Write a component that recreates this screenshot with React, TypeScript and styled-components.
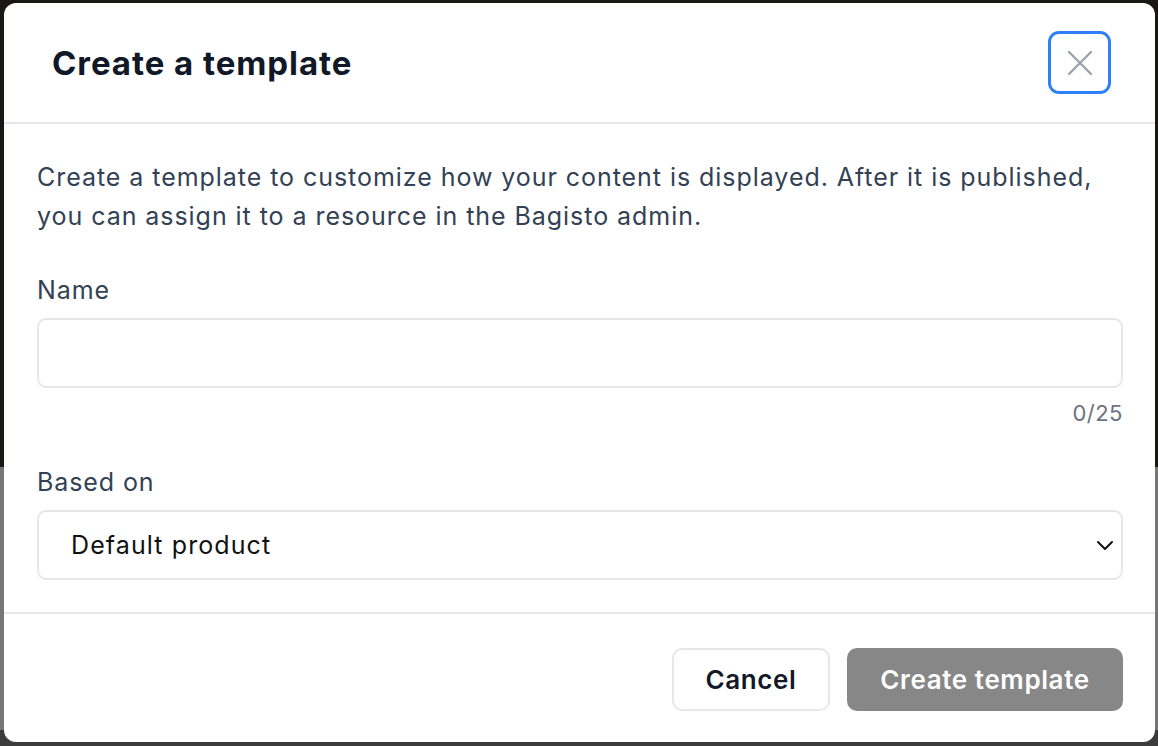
import React from "react";
import styled, { createGlobalStyle } from "styled-components";

const GlobalStyle = createGlobalStyle`
    * {
        box-sizing: border-box;
    }
    html, body {
        margin: 0;
        padding: 0;
        height: 100%;
    }
    body {
        font-family: Inter, "Noto Sans", "Liberation Sans", sans-serif;
        background: linear-gradient(to bottom, #1a1714 0, #1a1714 467px, #767676 467px, #767676 730px, #3c3c3c 730px);
        overflow: hidden;
    }
`

const Backdrop = styled.div`
    width: 1158px;
    height: 746px;
    padding: 3px 3px 4px 4px;
    display: flex;
`

const Modal = styled.div`
    flex: 1 1;
    background: #ffffff;
    border-radius: 12px;
    display: flex;
    flex-direction: column;
    overflow: hidden;
`

const Header = styled.div`
    height: 121px;
    flex: 0 0 auto;
    display: flex;
    align-items: center;
    justify-content: space-between;
    padding: 0 44px 0 48px;
    border-bottom: 2px solid #e5e7eb;

    h2 {
        margin: 0;
        font-size: 33px;
        font-weight: 700;
        color: #111827;
        letter-spacing: 0.95px;
    }
`

const CloseButton = styled.button`
    width: 63px;
    height: 63px;
    border: 3px solid #2f7ff6;
    border-radius: 11px;
    background: #ffffff;
    display: flex;
    align-items: center;
    justify-content: center;
    padding: 0;
    cursor: pointer;
    color: #9ca3af;
`

const Body = styled.div`
    flex: 1 1;
    display: flex;
    flex-direction: column;
    padding: 34px 32px 0 33px;
`

const Intro = styled.p`
    margin: 0 0 36px;
    font-size: 25px;
    line-height: 39px;
    letter-spacing: 0.95px;
    color: #334155;
`

const Label = styled.label`
    display: block;
    font-size: 25px;
    line-height: 36px;
    letter-spacing: 0.9px;
    color: #334155;
    margin-bottom: 10px;
`

const TextInput = styled.input`
    width: 100%;
    height: 70px;
    border: 2px solid #e5e7eb;
    border-radius: 9px;
    padding: 0 32px;
    font-family: inherit;
    font-size: 25px;
    color: #111111;
    outline: none;
`

const Counter = styled.div`
    text-align: right;
    font-size: 22px;
    line-height: 30px;
    letter-spacing: 0.5px;
    color: #6b7280;
    margin: 10px 0 36px;
`

const SelectWrap = styled.div`
    position: relative;
    height: 70px;

    svg {
        position: absolute;
        right: 9px;
        top: 29px;
        pointer-events: none;
    }
`

const Select = styled.select`
    width: 100%;
    height: 70px;
    appearance: none;
    border: 2px solid #e5e7eb;
    border-radius: 9px;
    background: #ffffff;
    padding: 0 32px;
    font-family: inherit;
    font-size: 25px;
    letter-spacing: 1.1px;
    color: #111111;
    outline: none;
`

const Footer = styled.div`
    height: 130px;
    flex: 0 0 auto;
    border-top: 2px solid #e5e7eb;
    display: flex;
    align-items: center;
    justify-content: flex-end;
    gap: 17px;
    padding: 2px 32px 0;
`

const Button = styled.button<{ $primary?: boolean }>`
    width: ${p => (p.$primary ? "276px" : "158px")};
    height: 63px;
    border-radius: 10px;
    border: 2px solid ${p => (p.$primary ? "#878787" : "#e5e7eb")};
    background: ${p => (p.$primary ? "#878787" : "#ffffff")};
    color: ${p => (p.$primary ? "#ffffff" : "#111827")};
    font-family: inherit;
    font-size: 26px;
    font-weight: 600;
    letter-spacing: 0.6px;
    padding: 0;
    cursor: pointer;
`

function App() {
    return (
        <>
            <GlobalStyle/>
            <Backdrop>
                <Modal>
                    <Header>
                        <h2>Create a template</h2>
                        <CloseButton aria-label="Close">
                            <svg width="26" height="26" viewBox="0 0 26 26" fill="none" stroke="currentColor"
                                 strokeWidth="2.4" strokeLinecap="round">
                                <path d="M2 2L24 24M24 2L2 24"/>
                            </svg>
                        </CloseButton>
                    </Header>
                    <Body>
                        <Intro>
                            Create a template to customize how your content is displayed. After it is published,
                            you can assign it to a resource in the Bagisto admin.
                        </Intro>
                        <Label htmlFor="tpl-name">Name</Label>
                        <TextInput id="tpl-name" maxLength={25}/>
                        <Counter>0/25</Counter>
                        <Label htmlFor="tpl-base">Based on</Label>
                        <SelectWrap>
                            <Select id="tpl-base" defaultValue="default">
                                <option value="default">Default product</option>
                            </Select>
                            <svg width="18" height="12" viewBox="0 0 18 12" fill="none" stroke="#111111"
                                 strokeWidth="2" strokeLinecap="round" strokeLinejoin="round">
                                <path d="M2 3L9 10L16 3"/>
                            </svg>
                        </SelectWrap>
                    </Body>
                    <Footer>
                        <Button>Cancel</Button>
                        <Button $primary>Create template</Button>
                    </Footer>
                </Modal>
            </Backdrop>
        </>
    );
}

export default App;
